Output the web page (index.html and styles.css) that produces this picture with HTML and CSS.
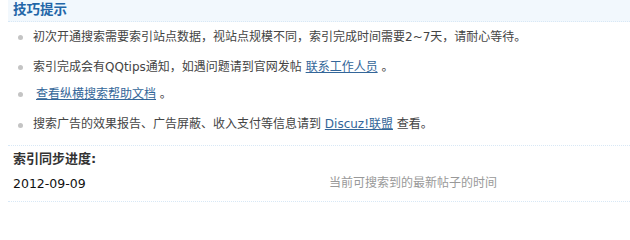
FILE: index.html
```html
<!DOCTYPE html>
<html>
<head>
<meta charset="utf-8">
<link rel="stylesheet" href="styles.css">
</head>
<body>
<div class="panel">
  <div class="partition">技巧提示</div>
  <ul class="tips">
    <li>初次开通搜索需要索引站点数据，视站点规模不同，索引完成时间需要2~7天，请耐心等待。</li>
    <li>索引完成会有QQtips通知，如遇问题请到官网发帖 <a href="#">联系工作人员</a> 。</li>
    <li class="lead"><a href="#">查看纵横搜索帮助文档</a> 。</li>
    <li>搜索广告的效果报告、广告屏蔽、收入支付等信息请到 <a href="#">Discuz!联盟</a> 查看。</li>
  </ul>
  <div class="progress">
    <div class="progress-title">索引同步进度:</div>
    <div class="progress-row">
      <span class="date">2012-09-09</span>
      <span class="note">当前可搜索到的最新帖子的时间</span>
    </div>
  </div>
</div>
</body>
</html>
```

FILE: styles.css
```css
html, body {
  margin: 0;
  padding: 0;
  background: #fff;
}
body {
  font-family: "DejaVu Sans", "Noto Sans CJK SC", sans-serif;
  font-size: 12px;
  color: #444;
}
.panel {
  margin-left: 8px;
}
.partition {
  height: 21px;
  line-height: 19px;
  padding-left: 5px;
  background: #f2f8fd;
  border-bottom: 1px dotted #d8e8f6;
  color: #2366a8;
  font-weight: bold;
  font-size: 13.5px;
}
.tips {
  list-style: none;
  margin: 0;
  padding: 0;
}
.tips li {
  position: relative;
  height: 29px;
  line-height: 29px;
  padding-left: 25px;
  white-space: nowrap;
}
.tips li.lead {
  padding-left: 28px;
}
.tips li::before {
  content: "";
  position: absolute;
  left: 10px;
  top: 13px;
  width: 5px;
  height: 5px;
  border-radius: 50%;
  background: #c4c4c4;
}
.tips li:nth-child(1) { height: 30px; line-height: 30px; }
.tips li:nth-child(2) { height: 28px; line-height: 30px; }
.tips li:nth-child(3) { height: 30px; line-height: 28px; }
.tips li:nth-child(3)::before { top: 12px; }
.tips a {
  color: #336699;
  text-decoration: underline;
}
.progress {
  margin-top: 6px;
  border-top: 1px dotted #d8e8f6;
  border-bottom: 1px dotted #d8e8f6;
}
.progress-title {
  height: 26px;
  line-height: 26px;
  padding-left: 5px;
  font-weight: bold;
  font-size: 13px;
  color: #333;
}
.progress-row {
  display: grid;
  grid-template-columns: 316px 1fr;
  height: 29px;
  line-height: 23px;
}
.date {
  padding-left: 5px;
  color: #111;
  font-size: 12.5px;
}
.note {
  padding-left: 5px;
  color: #999;
}
```
